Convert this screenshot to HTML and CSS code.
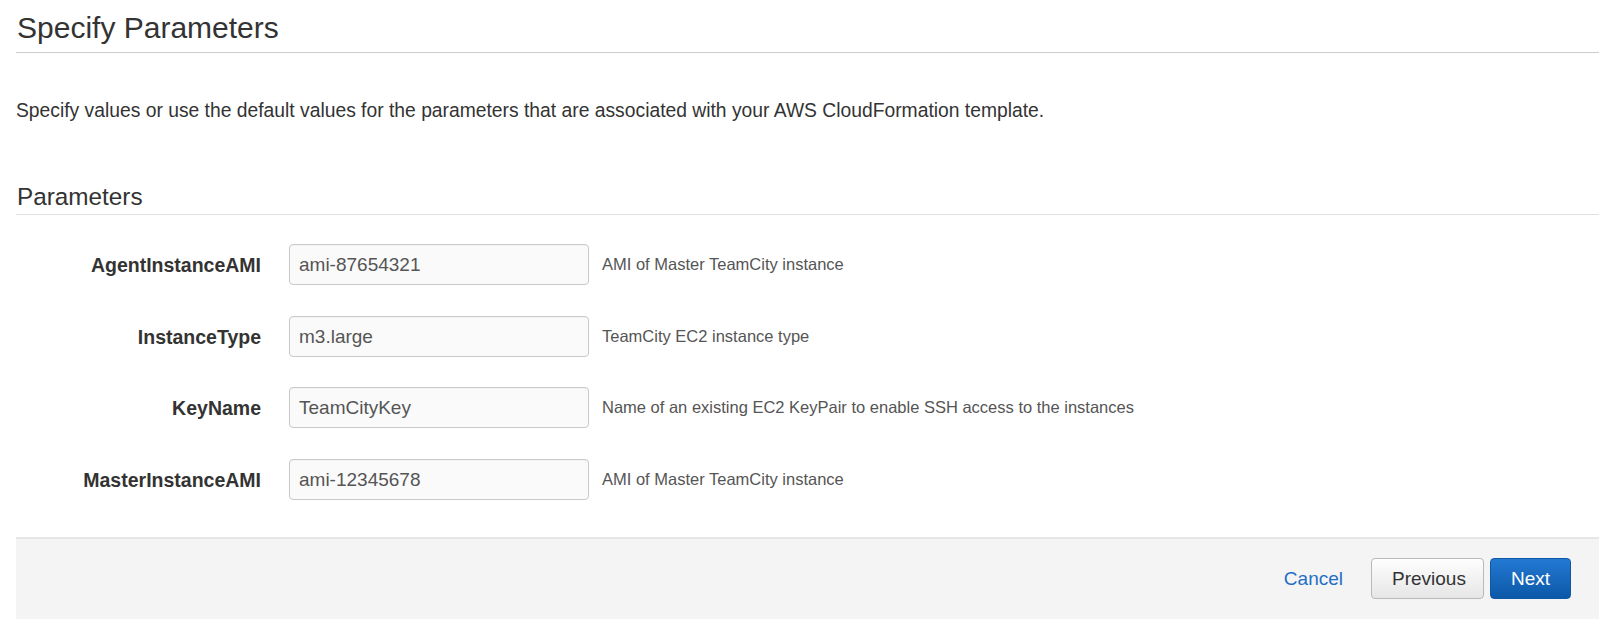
FILE: index.html
```html
<!DOCTYPE html>
<html lang="en">
<head>
<meta charset="utf-8">
<title>Specify Parameters</title>
<link rel="stylesheet" href="styles.css">
</head>
<body>
<div class="page">
  <h1 class="page-title">Specify Parameters</h1>
  <p class="intro">Specify values or use the default values for the parameters that are associated with your AWS CloudFormation template.</p>
  <h2 class="section-title">Parameters</h2>
  <div class="params">
    <div class="param-row">
      <label class="param-label" for="p1">AgentInstanceAMI</label>
      <input class="param-input" id="p1" type="text" value="ami-87654321">
      <span class="param-desc">AMI of Master TeamCity instance</span>
    </div>
    <div class="param-row">
      <label class="param-label" for="p2">InstanceType</label>
      <input class="param-input" id="p2" type="text" value="m3.large">
      <span class="param-desc">TeamCity EC2 instance type</span>
    </div>
    <div class="param-row">
      <label class="param-label" for="p3">KeyName</label>
      <input class="param-input" id="p3" type="text" value="TeamCityKey">
      <span class="param-desc">Name of an existing EC2 KeyPair to enable SSH access to the instances</span>
    </div>
    <div class="param-row">
      <label class="param-label" for="p4">MasterInstanceAMI</label>
      <input class="param-input" id="p4" type="text" value="ami-12345678">
      <span class="param-desc">AMI of Master TeamCity instance</span>
    </div>
  </div>
  <div class="footer">
    <a class="cancel" href="#">Cancel</a>
    <button class="btn btn-secondary" type="button">Previous</button>
    <button class="btn btn-primary" type="button">Next</button>
  </div>
</div>
</body>
</html>
```

FILE: styles.css
```css
* { box-sizing: border-box; }

html, body {
  margin: 0;
  padding: 0;
  background: #ffffff;
}

body {
  font-family: "Liberation Sans", Arial, Helvetica, sans-serif;
  color: #333333;
}

.page {
  padding: 0 1px 0 16px;
}

.page-title {
  margin: 0;
  padding: 10px 0 7px 1px;
  font-size: 30px;
  line-height: 35px;
  font-weight: normal;
  color: #333333;
  border-bottom: 1px solid #cccccc;
}

.intro {
  margin: 46px 0 0 0;
  font-size: 19.3px;
  line-height: 24px;
  color: #333333;
}

.section-title {
  margin: 59px 0 0 0;
  padding: 0 0 2px 1px;
  font-size: 24.3px;
  line-height: 30px;
  font-weight: normal;
  color: #333333;
  border-bottom: 1px solid #e1e1e1;
}

.params {
  margin-top: 29px;
  display: flex;
  flex-direction: column;
  gap: 30.5px;
}

.param-row {
  display: grid;
  grid-template-columns: 245px 300px auto;
  column-gap: 28px;
  align-items: center;
  height: 41px;
}

.param-label {
  text-align: right;
  font-size: 19.5px;
  font-weight: bold;
  color: #333333;
  padding-top: 2px;
}

.param-input {
  height: 41px;
  width: 300px;
  margin: 0;
  padding: 1px 9px 0;
  font-family: "Liberation Sans", Arial, Helvetica, sans-serif;
  font-size: 19px;
  color: #555555;
  background: #fafafa;
  border: 1px solid #c9c9c9;
  border-radius: 4px;
  box-shadow: inset 0 1px 1px rgba(0, 0, 0, 0.03);
  outline: none;
}

.param-desc {
  margin-left: -15px;
  font-size: 16.5px;
  color: #555555;
  padding-top: 0;
}

.footer {
  margin-top: 37.5px;
  display: flex;
  justify-content: flex-end;
  align-items: center;
  gap: 6px;
  padding: 19px 28px 20px 0;
  background: #f4f4f4;
  border-top: 2px solid #e6e6e6;
}

.cancel {
  font-size: 19px;
  color: #1f6fc4;
  text-decoration: none;
  margin-right: 22px;
}

.btn {
  height: 41px;
  margin: 0;
  padding: 0 20px;
  font-family: "Liberation Sans", Arial, Helvetica, sans-serif;
  font-size: 19px;
  border-radius: 4px;
  cursor: pointer;
}

.btn-secondary {
  width: 113px;
  color: #333333;
  background: linear-gradient(to bottom, #fefefe, #e6e6e6);
  border: 1px solid #b9b9b9;
}

.btn-primary {
  width: 81px;
  color: #ffffff;
  background: linear-gradient(to bottom, #2379d2, #0c58a8);
  border: 1px solid #0f58a3;
}
```
